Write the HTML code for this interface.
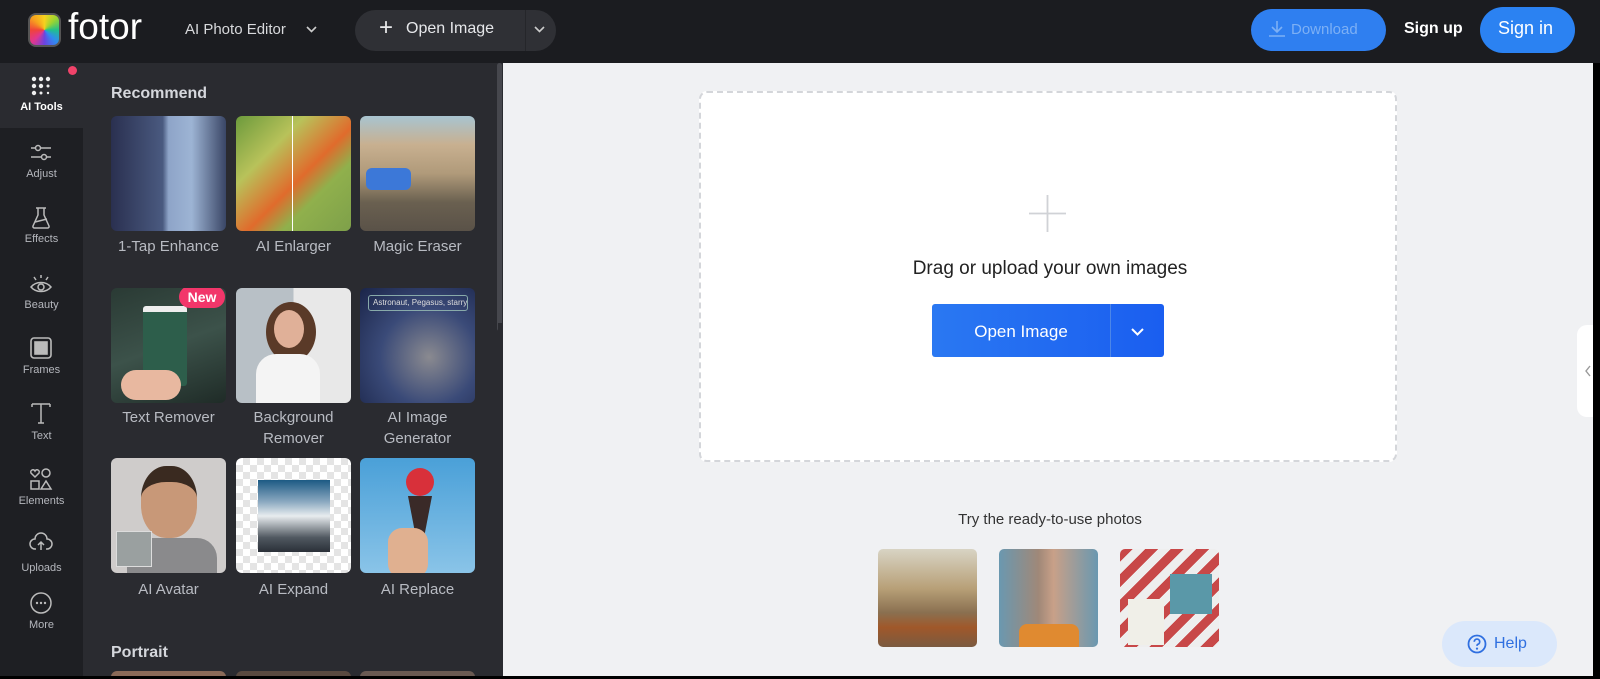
<!DOCTYPE html>
<html><head><meta charset="utf-8"><style>
*{margin:0;padding:0;box-sizing:border-box}
html,body{width:1600px;height:679px;overflow:hidden}
body{background:#000;font-family:"Liberation Sans",sans-serif;position:relative}
.a{position:absolute}
#hdr{left:0;top:0;width:1600px;height:63px;background:#1b1c20}
#bar{left:0;top:63px;width:83px;height:613px;background:#1e1f23}
#panel{left:83px;top:63px;width:420px;height:613px;background:#2a2b30;overflow:hidden}
#main{left:503px;top:63px;width:1090px;height:613px;background:#f0f1f3;overflow:hidden}
.lab{position:absolute;width:83px;text-align:center;font-size:11px;color:#b5b7bd}
.ic{position:absolute;left:29px;width:24px;height:24px}
.tile{position:absolute;width:115px;height:115px;border-radius:6px;overflow:hidden}
.tl{position:absolute;width:125px;text-align:center;font-size:15px;color:#b8bbc2;line-height:21px}
.th{position:absolute;width:99px;height:98px;border-radius:5px;top:549px;overflow:hidden}
</style></head><body>
<div id="hdr" class="a">
 <div class="a" style="left:28px;top:13px;width:33px;height:34px;border-radius:8px;background:conic-gradient(#f7d21e,#9bd431,#21c08b,#2f8bf0,#6a43e0,#e0368f,#f0433a,#f7a11e,#f7d21e);border:2px solid #555"></div>
 <div class="a" style="left:68px;top:6px;font-size:37px;color:#fff">fotor</div>
 <div class="a" style="left:185px;top:21px;font-size:15px;color:#d8d9dc">AI Photo Editor</div>
 <svg class="a" style="left:305px;top:25px" width="13" height="10"><path d="M2 2l4.5 4.5L11 2" stroke="#ccc" stroke-width="1.6" fill="none"/></svg>
 <div class="a" style="left:355px;top:10px;width:201px;height:41px;border-radius:21px;background:#2f3035"></div>
 <div class="a" style="left:525px;top:10px;width:1px;height:41px;background:#25262a"></div>
 <div class="a" style="left:379px;top:14px;font-size:24px;color:#e8e8ea;font-weight:300">+</div>
 <div class="a" style="left:406px;top:20px;font-size:16px;color:#e6e7ea">Open Image</div>
 <svg class="a" style="left:533px;top:25px" width="13" height="10"><path d="M2 2l4.5 4.5L11 2" stroke="#ccc" stroke-width="1.6" fill="none"/></svg>
 <div class="a" style="left:1251px;top:9px;width:135px;height:42px;border-radius:21px;background:#2f7ff0"></div>
 <svg class="a" style="left:1268px;top:20px" width="18" height="18"><path d="M9 1v11M4 7l5 5 5-5M1 16h16" stroke="#7db0f5" stroke-width="1.6" fill="none"/></svg>
 <div class="a" style="left:1291px;top:21px;font-size:15px;color:#7db0f5">Download</div>
 <div class="a" style="left:1404px;top:20px;font-size:16px;color:#fff;font-weight:bold">Sign up</div>
 <div class="a" style="left:1480px;top:7px;width:95px;height:46px;border-radius:23px;background:#2b82f2"></div>
 <div class="a" style="left:1498px;top:18px;font-size:18px;color:#fff">Sign in</div>
</div>
<div id="bar" class="a">
 <div class="a" style="left:0;top:0;width:83px;height:65px;background:#2a2b30"></div>
</div>
<div class="a" style="left:68px;top:66px;width:9px;height:9px;border-radius:50%;background:#f0436a"></div>
<svg class="ic" style="top:74px" viewBox="0 0 24 24"><g fill="#eee"><circle cx="5" cy="5" r="2.2"/><circle cx="12" cy="5" r="2.2"/><circle cx="19" cy="5" r="2.2"/><circle cx="5" cy="12" r="2.2"/><circle cx="12" cy="12" r="2.2"/><circle cx="19" cy="12" r="1.5"/><circle cx="5" cy="19" r="2.2"/><circle cx="12" cy="19" r="1.5"/><circle cx="19" cy="19" r="1.2"/></g></svg>
<div class="lab" style="top:101px;color:#fff;font-weight:bold">AI Tools</div>
<svg class="ic" style="top:141px" viewBox="0 0 24 24" fill="none" stroke="#bbb" stroke-width="1.5"><path d="M2 7h20M2 16h20"/><circle cx="9" cy="7" r="2.5" fill="#1e1f23"/><circle cx="15" cy="16" r="2.5" fill="#1e1f23"/></svg>
<div class="lab" style="top:168px">Adjust</div>
<svg class="ic" style="top:206px" viewBox="0 0 24 24" fill="none" stroke="#bbb" stroke-width="1.5"><path d="M9 2v7L4 20a1.5 1.5 0 0 0 1.3 2h13.4a1.5 1.5 0 0 0 1.3-2L15 9V2M7 2h10M6 16l12-3"/></svg>
<div class="lab" style="top:233px">Effects</div>
<svg class="ic" style="top:272px" viewBox="0 0 24 24" fill="none" stroke="#bbb" stroke-width="1.5"><path d="M2 15c5-6 15-6 20 0c-5 6-15 6-20 0z"/><circle cx="12" cy="15" r="3"/><path d="M12 3v3M5 5l2 3M19 5l-2 3"/></svg>
<div class="lab" style="top:299px">Beauty</div>
<svg class="ic" style="top:336px" viewBox="0 0 24 24" fill="none" stroke="#bbb" stroke-width="1.6"><rect x="2" y="2" width="20" height="20" rx="3"/><rect x="6" y="6" width="12" height="12" fill="#bbb"/></svg>
<div class="lab" style="top:364px">Frames</div>
<svg class="ic" style="top:401px" viewBox="0 0 24 24" fill="none" stroke="#bbb" stroke-width="1.5"><path d="M3 3h18M12 3v19M9 22h6M3 3v3M21 3v3"/></svg>
<div class="lab" style="top:430px">Text</div>
<svg class="ic" style="top:467px" viewBox="0 0 24 24" fill="none" stroke="#bbb" stroke-width="1.5"><path d="M6 10L2 6a2.2 2.2 0 0 1 4-2a2.2 2.2 0 0 1 4 2z"/><circle cx="17" cy="6" r="4"/><rect x="2" y="14" width="8" height="8"/><path d="M17 14l5 8H12z"/></svg>
<div class="lab" style="top:495px">Elements</div>
<svg class="ic" style="top:530px" viewBox="0 0 24 24" fill="none" stroke="#bbb" stroke-width="1.5"><path d="M7 19H6a5 5 0 0 1 0-10a6 6 0 0 1 12 0a5 5 0 0 1 0 10h-1M12 20v-8M9 15l3-3 3 3"/></svg>
<div class="lab" style="top:562px">Uploads</div>
<svg class="ic" style="top:591px" viewBox="0 0 24 24" fill="none" stroke="#bbb" stroke-width="1.5"><circle cx="12" cy="12" r="10"/><g fill="#bbb" stroke="none"><circle cx="8" cy="12" r="1.2"/><circle cx="12" cy="12" r="1.2"/><circle cx="16" cy="12" r="1.2"/></g></svg>
<div class="lab" style="top:619px">More</div>

<div id="panel" class="a">
 <div class="a" style="left:28px;top:22px;font-size:16px;font-weight:bold;color:#d5d7dc">Recommend</div>
 <div class="a" style="left:414px;top:0;width:5px;height:268px;border-radius:3px;background:#46474d"></div>
 <div class="tile" style="left:28px;top:53px;background:linear-gradient(90deg,#2a3050 0,#4a5a80 45%,#8ea4c8 50%,#9db4d4 70%,#3a4666 100%)"></div>
 <div class="tile" style="left:153px;top:53px;background:linear-gradient(135deg,#6c9a3c,#b8c25a 30%,#e06b2c 55%,#90b04c 70%,#7ea04a)"><div class="a" style="left:56px;top:0;width:1px;height:115px;background:#fff"></div></div>
 <div class="tile" style="left:277px;top:53px;background:linear-gradient(180deg,#a8c4d0 0,#c8b090 25%,#b09a7a 50%,#6a6050 75%,#5a5248)"><div class="a" style="left:6px;top:52px;width:45px;height:22px;border-radius:6px;background:#3c78d8"></div></div>
 <div class="tl" style="left:23px;top:173px">1-Tap Enhance</div>
 <div class="tl" style="left:148px;top:173px">AI Enlarger</div>
 <div class="tl" style="left:272px;top:173px">Magic Eraser</div>
 <div class="tile" style="left:28px;top:225px;background:linear-gradient(160deg,#2a3a34,#3c524a 50%,#1f2b27)"><div class="a" style="left:32px;top:18px;width:44px;height:80px;background:#2d5e4b;border-top:6px solid #eee;border-radius:3px"></div><div class="a" style="left:10px;top:82px;width:60px;height:30px;border-radius:15px;background:#e8b8a0"></div><div class="a" style="left:68px;top:-2px;width:46px;height:22px;border-radius:11px;background:#f2366a;color:#fff;font-size:14px;font-weight:bold;text-align:center;line-height:22px">New</div></div>
 <div class="tile" style="left:153px;top:225px;background:linear-gradient(90deg,#b8c0c6 50%,#e8e8e8 50%)"><div class="a" style="left:30px;top:14px;width:50px;height:60px;border-radius:50%;background:#5a3a28"></div><div class="a" style="left:38px;top:22px;width:30px;height:38px;border-radius:50%;background:#e0b098"></div><div class="a" style="left:20px;top:66px;width:64px;height:50px;border-radius:20px 20px 0 0;background:#f4f4f4"></div></div>
 <div class="tile" style="left:277px;top:225px;background:radial-gradient(circle at 60% 60%,#8a8a90,#3a4a78 50%,#1a2448)"><div class="a" style="left:8px;top:7px;width:100px;height:16px;border:1px solid #8aa;border-radius:3px;font-size:8px;color:#ddd;padding-left:4px;line-height:14px;white-space:nowrap;overflow:hidden">Astronaut, Pegasus, starry</div></div>
 <div class="tl" style="left:23px;top:344px">Text Remover</div>
 <div class="tl" style="left:148px;top:344px">Background<br>Remover</div>
 <div class="tl" style="left:272px;top:344px">AI Image<br>Generator</div>
 <div class="tile" style="left:28px;top:395px;background:#cfcccb"><div class="a" style="left:30px;top:8px;width:56px;height:72px;border-radius:45%;background:#c89878;border-top:16px solid #3a2a20"></div><div class="a" style="left:16px;top:80px;width:90px;height:40px;border-radius:20px 20px 0 0;background:#8a8a8c"></div><div class="a" style="left:5px;top:73px;width:36px;height:36px;background:#9aa0a0;border:1px solid #ddd"></div></div>
 <div class="tile" style="left:153px;top:395px;background:repeating-conic-gradient(#e4e4e4 0 25%,#fff 0 50%) 0 0/14px 14px"><div class="a" style="left:22px;top:22px;width:72px;height:72px;background:linear-gradient(180deg,#1c5a84,#8aa8c0 30%,#e8ecef 50%,#505860 80%,#2a3038)"></div></div>
 <div class="tile" style="left:277px;top:395px;background:linear-gradient(180deg,#4aa0d8,#8ac4e8)"><div class="a" style="left:46px;top:10px;width:28px;height:28px;border-radius:50%;background:#d8303a"></div><div class="a" style="left:48px;top:38px;width:24px;height:50px;background:#3a2a28;clip-path:polygon(0 0,100% 0,60% 100%,40% 100%)"></div><div class="a" style="left:28px;top:70px;width:40px;height:50px;border-radius:14px;background:#e0b090"></div></div>
 <div class="tl" style="left:23px;top:516px">AI Avatar</div>
 <div class="tl" style="left:148px;top:516px">AI Expand</div>
 <div class="tl" style="left:272px;top:516px">AI Replace</div>
 <div class="a" style="left:28px;top:581px;font-size:16px;font-weight:bold;color:#d5d7dc">Portrait</div>
 <div class="tile" style="left:28px;top:608px;background:#8a6a58"></div>
 <div class="tile" style="left:153px;top:608px;background:#5a4a40"></div>
 <div class="tile" style="left:277px;top:608px;background:#6a5a52"></div>
</div>
<div class="a" style="left:498px;top:323px;width:22px;height:94px;border-radius:0 12px 12px 0;background:#2a2b30"></div>
<svg class="a" style="left:504px;top:363px" width="10" height="14"><path d="M7 2L3 7l4 5" stroke="#aaa" stroke-width="1.6" fill="none"/></svg>

<div id="main" class="a">
 <div class="a" style="left:196px;top:28px;width:698px;height:371px;background:#fff;border:2px dashed #d4d6da;border-radius:8px"></div>
 <div class="a" style="left:1074px;top:262px;width:20px;height:92px;border-radius:10px 0 0 10px;background:#fff"></div>
 <svg class="a" style="left:1080px;top:301px" width="10" height="14"><path d="M7 2L3 7l4 5" stroke="#999" stroke-width="1.4" fill="none"/></svg>
</div>
<svg class="a" style="left:1029px;top:195px" width="37" height="37"><path d="M18.5 0v37M0 18.5h37" stroke="#d0d2d6" stroke-width="1.8"/></svg>
<div class="a" style="left:700px;top:258px;width:700px;text-align:center;font-size:19px;color:#222">Drag or upload your own images</div>
<div class="a" style="left:932px;top:304px;width:232px;height:53px;border-radius:3px;background:linear-gradient(90deg,#2a78f2,#1a5ef0)"></div>
<div class="a" style="left:1110px;top:304px;width:1px;height:53px;background:#4c86e8"></div>
<div class="a" style="left:932px;top:322px;width:178px;text-align:center;font-size:17px;color:#fff">Open Image</div>
<svg class="a" style="left:1130px;top:327px" width="15" height="10"><path d="M2 2l5.5 5.5L13 2" stroke="#fff" stroke-width="2" fill="none"/></svg>
<div class="a" style="left:900px;top:511px;width:300px;text-align:center;font-size:15px;color:#333">Try the ready-to-use photos</div>
<div class="th" style="left:878px;background:linear-gradient(180deg,#d8d4c4 0,#b8a078 40%,#8a7050 65%,#a0582a 80%,#7a5a40)"></div>
<div class="th" style="left:999px;background:linear-gradient(90deg,#6a98b0,#a08878 40%,#c8a088 55%,#6a98b0)"><div class="a" style="left:20px;top:75px;width:60px;height:23px;background:#e08a30;border-radius:8px 8px 0 0"></div></div>
<div class="th" style="left:1120px;background:repeating-linear-gradient(135deg,#c84848 0 9px,#eee 9px 18px)"><div class="a" style="left:8px;top:50px;width:36px;height:46px;background:#f0efe8"></div><div class="a" style="left:50px;top:25px;width:42px;height:40px;background:#5a98a8"></div></div>
<div class="a" style="left:1442px;top:621px;width:115px;height:46px;border-radius:23px;background:#dbe8fb"></div>
<svg class="a" style="left:1467px;top:634px" width="20" height="20"><circle cx="10" cy="10" r="8.5" stroke="#2f6fe0" stroke-width="1.8" fill="none"/><path d="M7.3 7.8a2.7 2.7 0 1 1 3.6 2.5c-.7.3-.9.8-.9 1.6" stroke="#2f6fe0" stroke-width="1.7" fill="none"/><circle cx="10" cy="14.6" r="1.1" fill="#2f6fe0"/></svg>
<div class="a" style="left:1494px;top:635px;font-size:16px;color:#2f6fe0">Help</div>
</body></html>
